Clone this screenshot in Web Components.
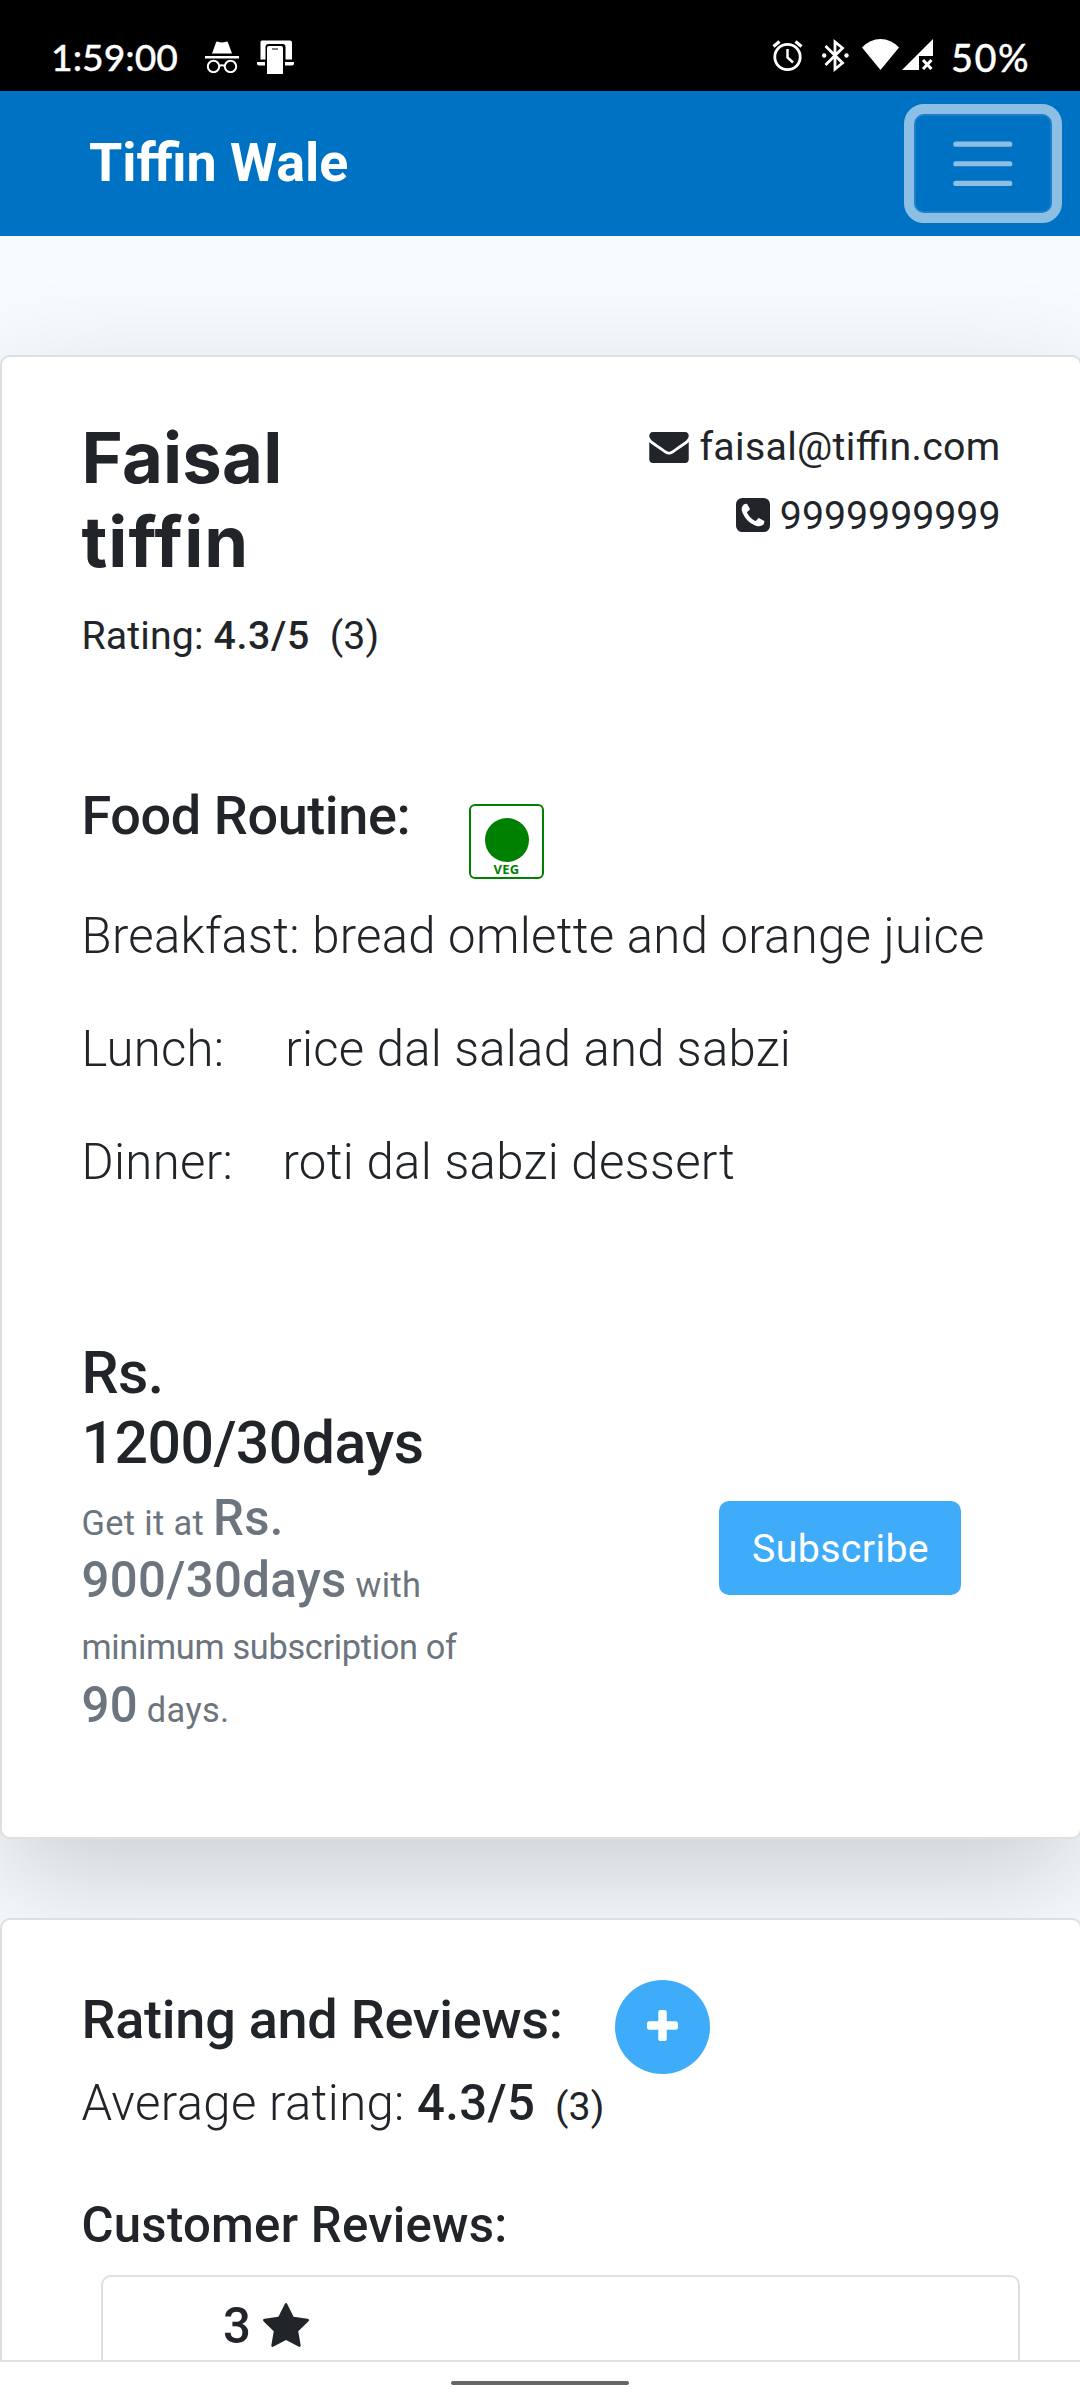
<!DOCTYPE html>
<html lang="en">
<head>
<meta charset="utf-8">
<title>Tiffin Wale</title>
<style>
html,body{margin:0;padding:0}
body{width:1080px;height:2400px;overflow:hidden;font-family:Roboto,"Noto Sans",sans-serif;font-size:39.27px;color:#212529;background:#f5fbff;font-feature-settings:"liga" 1}
</style>
</head>
<body>
<tiffin-app></tiffin-app>
<script>
const define=(name,html)=>{
  const t=document.createElement('template');
  t.innerHTML=html;
  customElements.define(name,class extends HTMLElement{
    constructor(){super();this.attachShadow({mode:'open'}).append(t.content.cloneNode(true));}
  });
};

const GLYPHS={
  envelope:['0 256 1792 1408','M1792 710v794q0 66-47 113t-113 47h-1472q-66 0-113-47t-47-113v-794q44 49 101 87 362 246 497 345 57 42 92.500 65.500t94.500 48 110 24.500h2q51 0 110-24.500t94.500-48 92.500-65.500q170-123 498-345 57-39 100-87zm0-294q0 79-49 151t-122 123q-376 261-468 325-10 7-42.500 31t-54 38.500-52 32.500-57.500 27-50 9h-2q-23 0-50-9t-57.500-27-52-32.500-54-38.500-42.500-31q-91-64-262-182.500t-205-142.500q-62-42-117-115.500t-55-136.500q0-78 41.500-130t118.500-52h1472q65 0 112.500 47t47.500 113z'],
  phone:['128 128 1536 1536','M1408 1193q0-11-2-16t-18-16.500-40.500-25-47.500-26.500-45.500-25-28.500-15q-5-3-19-13t-25-15-21-5q-15 0-36.500 20.500t-39.500 45-38.500 45-33.500 20.500q-7 0-16.500-3.500t-15.500-6.500-17-9.500-14-8.500q-99-55-170-126.500t-127-170.500q-2-3-8.500-14t-9.500-17-6.500-15.500-3.500-16.500q0-13 20.500-33.500t45-38.500 45-39.500 20.500-36.500q0-10-5-21t-15-25-13-19q-3-6-15-28.500t-25-45.500-26.500-47.500-25-40.500-16.500-18-16-2q-48 0-101 22-46 21-80 94.500t-34 130.500q0 16 2.500 34t5 30.500 9 33 10 29.500 12.500 33 11 30q60 164 216.500 320.500t320.500 216.500q6 2 30 11t33 12.500 29.500 10 33 9 30.500 5 34 2.500q57 0 130.500-34t94.500-80q22-53 22-101zm256-777v960q0 119-84.500 203.500t-203.500 84.500h-960q-119 0-203.500-84.500t-84.500-203.500v-960q0-119 84.500-203.500t203.500-84.500h960q119 0 203.500 84.500t84.500 203.500z'],
  plus:['192 128 1408 1408','M1600 736v192q0 40-28 68t-68 28h-416v416q0 40-28 68t-68 28h-192q-40 0-68-28t-28-68v-416h-416q-40 0-68-28t-28-68v-192q0-40 28-68t68-28h416v-416q0-40 28-68t68-28h192q40 0 68 28t28 68v416h416q40 0 68 28t28 68z'],
  star:['64 32 1664 1587','M1728 647q0 22-26 48l-363 354 86 500q1 7 1 20 0 21-10.500 35.500t-30.500 14.500q-19 0-40-12l-449-236-449 236q-22 12-40 12-21 0-31.500-14.500t-10.500-35.500q0-6 2-20l86-500-364-354q-25-27-25-48 0-37 56-46l502-73 225-455q19-41 49-41t49 41l225 455 502 73q56 9 56 46z']
};
customElements.define('glyph-icon',class extends HTMLElement{
  connectedCallback(){
    if(this.shadowRoot)return;
    const [box,d]=GLYPHS[this.getAttribute('name')];
    this.attachShadow({mode:'open'}).innerHTML=`<style>:host{display:inline-block;line-height:0}svg{display:block;width:100%;height:100%}</style><svg viewBox="${box}" fill="currentColor"><path d="${d}"/></svg>`;
  }
});

define('status-bar',`<style>
:host{display:flex;box-sizing:border-box;height:91px;background:#000;color:#fff;padding:36px 50px 0 50px;align-items:flex-start;font-family:Lato,"Noto Sans",sans-serif;font-weight:500;-webkit-text-stroke:.3px #fff}
span{font-size:37.300px;line-height:42px;white-space:nowrap}
svg{display:block;flex:none}
.time{width:154px;padding-left:1px}
.level{margin-left:18px;width:79px;letter-spacing:1.500px;font-size:38px}
.gap{flex:1}
</style>
<span class="time">1:59:00</span>
<svg style="margin-top:5px" width="34" height="32" viewBox="0 0 34 32"><path d="M11 1.500Q11.500.200 13 .8Q17 2 21 .8Q22.500.200 23 1.500L27 12.500H7Z" fill="#fff"/><path d="M0 15H34V17.500H0Z" fill="#fff"/><g fill="none" stroke="#fff" stroke-width="2"><circle cx="8.500" cy="25.500" r="5.700"/><circle cx="25.500" cy="25.500" r="5.700"/><path d="M14 25Q17 23.400 20 25"/></g></svg>
<svg style="margin:4px 0 0 18px" width="37" height="35" viewBox="0 0 37 35" fill="#fff"><path d="M5 .5H33Q35 .5 35 2.500V19.500H28.500V7Q28.500 4 25.500 4H11.500Q8.500 4 8.500 7V19.500H3.500V2Q3.500.5 5 .5Z"/><path d="M0 22H8V25.500H2Q0 25.500 0 23.500ZM28 22H37V23.500Q37 25.500 35 25.500H28Z"/><path d="M12 6H24Q26 6 26 8V34H10V8Q10 6 12 6ZM15 8.500V9.500H21V8.500Z" fill-rule="evenodd"/></svg>
<div class="gap"></div>
<svg style="margin-top:3px" width="31" height="33" viewBox="0 0 31 33" fill="none" stroke="#fff"><circle cx="15.500" cy="18" r="12.700" stroke-width="2.800"/><path d="M15.500 10V18.500L21 23.500" stroke-width="2.500"/><path d="M1.500 7.500L7.500 2.500M29.500 7.500L23.500 2.500" stroke-width="3.200"/></svg>
<svg style="margin:2px 0 0 19px" width="27" height="34" viewBox="0 0 27 34"><path d="M3.500 8L20.500 25L13 31V4L20.500 10L3.500 27" fill="none" stroke="#fff" stroke-width="2.800"/><circle cx="2.200" cy="17.500" r="2.200" fill="#fff"/><circle cx="24.500" cy="17.500" r="2.200" fill="#fff"/></svg>
<svg style="margin:3px 0 0 13px" width="37" height="31" viewBox="0 0 37 31"><path d="M0 8.500Q8 0 18.500 0Q29 0 37 8.500L18.500 31Z" fill="#fff"/></svg>
<svg style="margin:3px 0 0 3px" width="31" height="31" viewBox="0 0 31 31"><path d="M31 0V17H17V31H0Z" fill="#fff"/><path d="M21 21L29.500 30M29.500 21L21 30" stroke="#fff" stroke-width="3"/></svg>
<span class="level">50%</span>`);

define('nav-bar',`<style>
:host{display:flex;box-sizing:border-box;height:145px;background:#0072c3;padding:0 18px 0 89px;align-items:center;justify-content:space-between}
b{font-size:53.800px;line-height:60px;font-weight:700;color:#fff;padding-bottom:1px}
button{display:flex;align-items:center;justify-content:center;box-sizing:border-box;width:158px;height:119px;margin:0;padding:0;background:none;border:10px solid #8cbfe3;border-radius:20px;box-shadow:inset 0 0 0 2px #1a80c9}
svg{display:block}
</style><b>Tiffin Wale</b><button aria-label="Menu"><svg width="73.600" height="73.600" viewBox="0 0 30 30"><path d="M4 7H26M4 15H26M4 23H26" stroke="#8cbfe3" stroke-width="2.100" stroke-linecap="round"/></svg></button>`);

define('panel-card',`<style>
:host{display:block;box-sizing:border-box;background:#fff;border:2px solid #dfdfdf;border-radius:10px}
</style><slot></slot>`);

define('contact-row',`<style>
:host{display:flex;justify-content:flex-end;align-items:baseline;gap:10px;line-height:69px;height:69px;white-space:nowrap}
</style><slot name="icon"></slot><span><slot></slot></span>`);

define('meal-row',`<style>
:host{display:flex;height:60px;line-height:60px;margin-bottom:53.200px;font-size:49.090px;font-weight:300;white-space:pre}
</style><slot></slot>`);

define('veg-badge',`<style>
:host{display:flex;flex-direction:column;align-items:center;box-sizing:border-box;width:75px;height:75px;border:2.400px solid green;border-radius:6px;color:green;background:#fff}
i{display:block;width:44px;height:44px;border-radius:50%;background:green;margin-top:12px}
span{font:700 13px/14px "Noto Sans",sans-serif;letter-spacing:.3px;margin-top:0}
</style><i></i><span>VEG</span>`);

define('provider-card',`<style>
:host{display:block}
panel-card{width:1082px;height:1484px;box-shadow:0 39px 118px rgba(0,0,0,.175)}
.body{padding:59px 79.500px 0 79.500px}
.head{display:flex;justify-content:space-between;height:367px}
h1{font:700 70.500px/84px Inter,sans-serif;margin:0;width:300px;letter-spacing:.2px}
h1 span{letter-spacing:1px}
.rate{line-height:60px;margin-top:21.600px;white-space:pre;letter-spacing:.12px}
b{font-weight:500}
.rate b{letter-spacing:.7px}
.contact{margin-top:-3px}
.mail{letter-spacing:.32px}
.food{display:flex;height:123px}
h2{font-size:54px;line-height:65px;font-weight:500;margin:0;white-space:nowrap;letter-spacing:-.4px}
.food h2{width:387.500px}
veg-badge{margin-top:21px}
.buy{display:flex;margin-top:145.600px}
.price{width:637.500px}
.price h2{font-size:58.900px;line-height:70px;letter-spacing:-.5px}
p{font-size:34.360px;line-height:62.200px;color:#6c757d;margin:14px 0 0;white-space:nowrap;letter-spacing:.35px}
p i{font-style:normal;letter-spacing:-.33px}
p b{font-size:49.090px;line-height:0}
button{font:400 39.270px/60px Roboto,sans-serif;letter-spacing:.4px;color:#fff;background:#3facfa;border:0;border-radius:10px;width:242px;height:94px;margin:163px 0 0;padding:2px 0 0 1px}
.env{width:40px;height:31px;transform:translateY(3px)}
.ph{width:34px;height:34px;transform:translateY(3px)}
</style>
<panel-card><div class="body">
<div class="head"><div><h1>Faisal<br><span>tiffin</span></h1><div class="rate">Rating: <b>4.3/5</b>&nbsp; (3)</div></div>
<div class="contact"><contact-row class="mail"><glyph-icon slot="icon" class="env" name="envelope"></glyph-icon>faisal@tiffin.com</contact-row><contact-row><glyph-icon slot="icon" class="ph" name="phone"></glyph-icon>9999999999</contact-row></div></div>
<div class="food"><h2>Food Routine:</h2><veg-badge></veg-badge></div>
<meal-row style="letter-spacing:.29px">Breakfast: bread omlette and orange juice</meal-row>
<meal-row style="letter-spacing:.24px">Lunch:&nbsp;&nbsp;&nbsp;&nbsp; rice dal salad and sabzi</meal-row>
<meal-row style="letter-spacing:.34px">Dinner:&nbsp;&nbsp;&nbsp; roti dal sabzi dessert</meal-row>
<div class="buy"><div class="price"><h2>Rs.<br>1200/30days</h2><p>Get it at <b>Rs.<br>900/30days</b> with<br><i>minimum subscription of</i><br><b>90</b> days.</p></div><button>Subscribe</button></div>
</div></panel-card>`);

define('reviews-card',`<style>
:host{display:block}
panel-card.outer{width:1082px;height:700px}
.body{padding:60px 60px 0 79.500px}
.top{display:flex;height:93px}
h2{font-size:54px;line-height:65px;font-weight:500;margin:7px 0 0;width:533.500px;white-space:nowrap;letter-spacing:-.25px}
button{display:flex;align-items:center;justify-content:center;width:95px;height:94px;border:0;border-radius:50%;background:#3facfa;color:#fff;padding:0 0 4px;margin:0}
button glyph-icon{width:31px;height:31px}
.avg{font-size:49.090px;line-height:60px;height:60px;font-weight:300;white-space:pre;letter-spacing:.36px}
b{font-weight:500}
.avg span{font-size:39.270px;font-weight:400;line-height:0;letter-spacing:.1px}
h3{font-size:49.090px;line-height:60px;font-weight:500;margin:62px 0 20px;letter-spacing:.27px}
panel-card.review{width:919px;height:300px;margin-left:19.500px}
.stars{display:flex;padding:19px 0 0 120px;font-size:49.090px;line-height:60px;font-weight:500;gap:12px}
.stars glyph-icon{width:46px;height:44px;margin-top:7px}
</style>
<panel-card class="outer"><div class="body">
<div class="top"><h2>Rating and Reviews:</h2><button aria-label="Add review"><glyph-icon name="plus"></glyph-icon></button></div>
<div class="avg">Average rating: <b>4.3/5</b><span>&nbsp; (3)</span></div>
<h3>Customer Reviews:</h3>
<panel-card class="review"><div class="stars"><span>3</span><glyph-icon name="star"></glyph-icon></div></panel-card>
</div></panel-card>`);

define('gesture-bar',`<style>
:host{display:flex;box-sizing:border-box;height:40px;background:#fff;border-top:2px solid #e0e0e0;justify-content:center;padding-top:19px}
i{display:block;width:178px;height:4px;border-radius:2px;background:#666}
</style><i></i>`);

define('tiffin-app',`<style>
:host{display:flex;flex-direction:column;width:1080px;height:2400px;overflow:hidden}
main{flex:1;min-height:0;overflow:hidden;padding-top:119px;box-sizing:border-box}
reviews-card{margin-top:79px}
reviews-card,provider-card{position:relative}
status-bar,nav-bar,gesture-bar{flex:none}
</style><status-bar></status-bar><nav-bar></nav-bar><main><provider-card></provider-card><reviews-card></reviews-card></main><gesture-bar></gesture-bar>`);
</script>
</body>
</html>
